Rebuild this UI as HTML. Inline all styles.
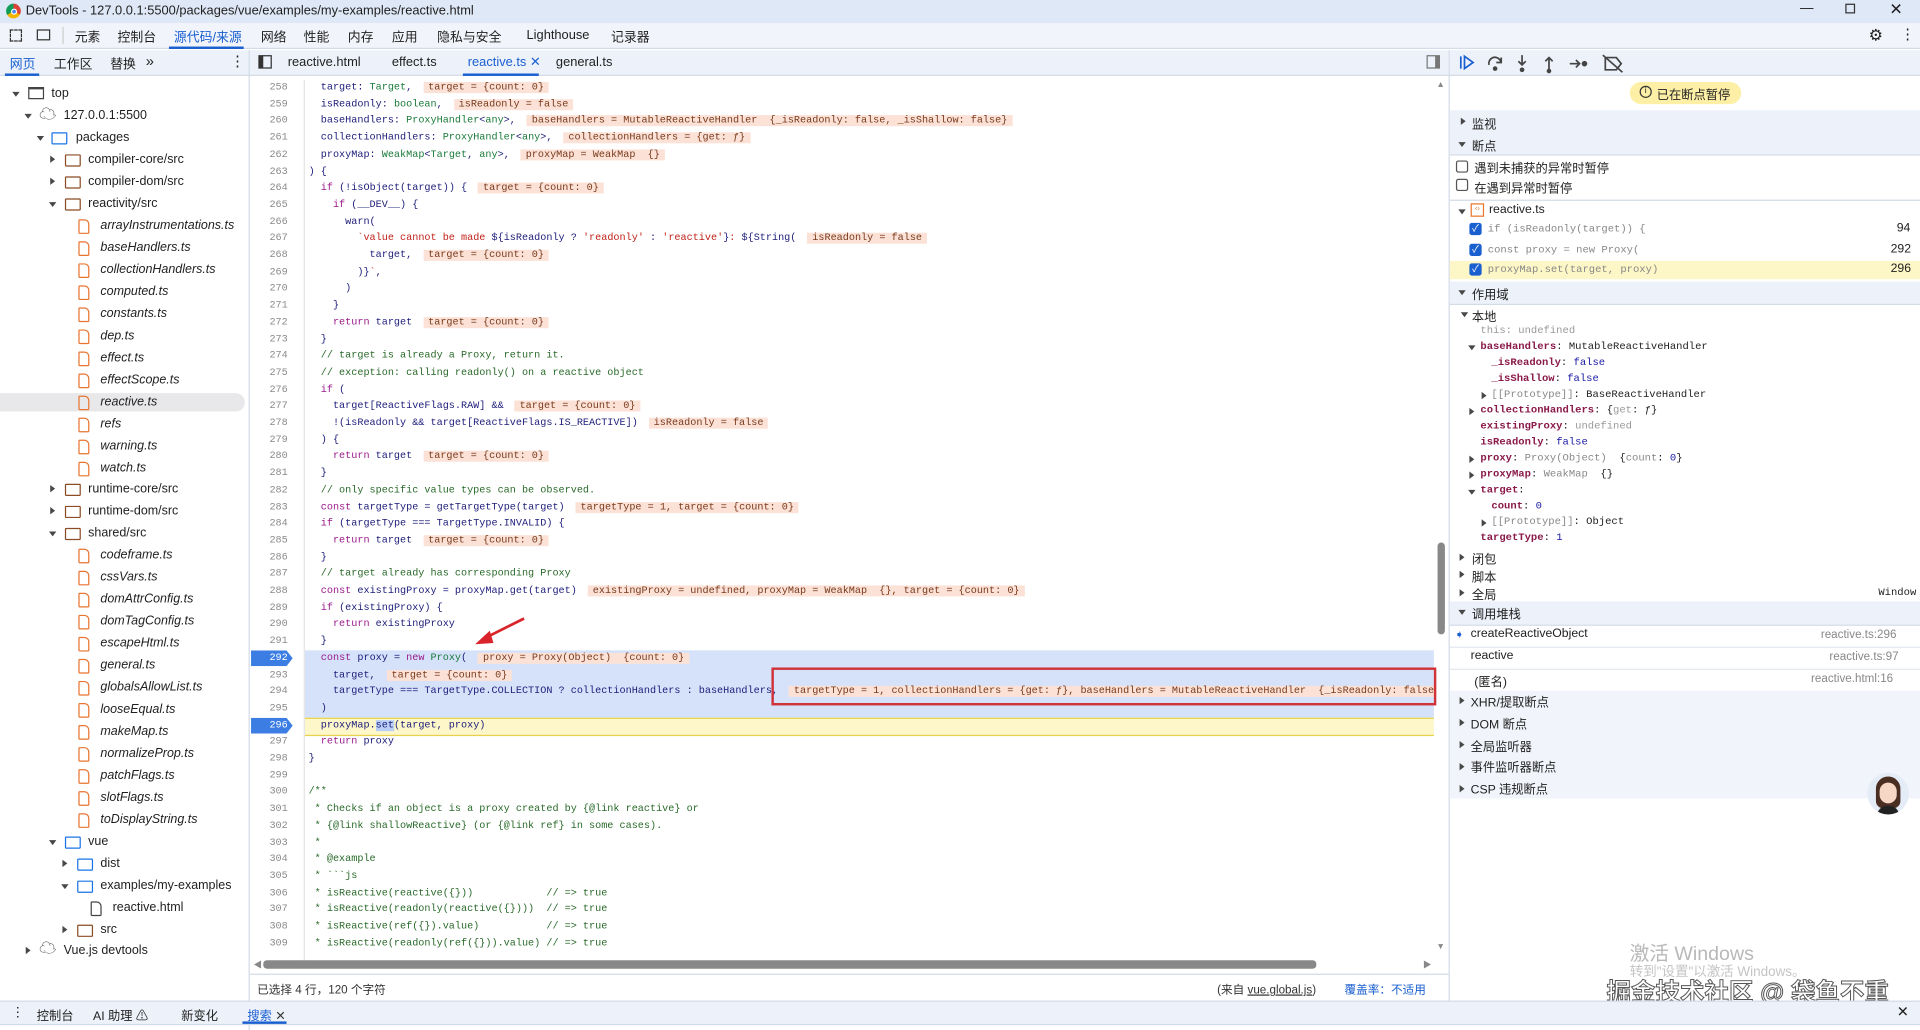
<!DOCTYPE html>
<html><head><meta charset="utf-8"><style>
*{margin:0;padding:0;box-sizing:border-box}
html,body{width:1920px;height:1030px;overflow:hidden;background:#fff}
#w{position:absolute;left:0;top:0;width:1568px;height:841px;transform:scale(1.22449,1.22473);transform-origin:0 0;font-family:"Liberation Sans","Noto Sans CJK SC",sans-serif;font-size:10.5px;color:#1f1f1f;background:#fff}
.a{position:absolute;white-space:pre}
.tr{position:absolute;white-space:pre;font-size:10.2px;line-height:14px}
.it{font-style:italic}
.arrd,.arrr{position:absolute;width:0;height:0}
.arrd{border-left:3.5px solid transparent;border-right:3.5px solid transparent;border-top:4.5px solid #474747}
.arrr{border-top:3.5px solid transparent;border-bottom:3.5px solid transparent;border-left:4.5px solid #474747}
.file{position:absolute;width:9px;height:12px;border:1.3px solid #e8742f;border-radius:1px 4px 1px 1px}
.fold{position:absolute;width:13px;height:10px;border:1.4px solid #8b4b24;border-radius:1px}
.fold.b{border-color:#1a73e8}
.code{position:absolute;left:0;font-family:"Liberation Mono","Noto Sans CJK SC",monospace;font-size:8.3px;line-height:13.7px;white-space:pre;height:13.7px;width:1172px}
.ln{position:absolute;left:205px;width:30px;text-align:right;color:#8a8a8a;font-size:8.3px}
.tx{position:absolute;left:252px;color:#1d1d7a}
.k{color:#9b1a8c}.g{color:#1a7a3a}.c{color:#2a6a2a}.s{color:#c0221a}
.bd{background:#fbe1d6;color:#7a3b1d;padding:0 4px;margin-left:4px}
.sc{position:absolute;font-family:"Liberation Mono","Noto Serif CJK SC",monospace;font-size:8.6px;white-space:pre;line-height:13px}
.nm{color:#8a1a4a;font-weight:bold}
.hdr{position:absolute;left:1184px;width:384px;height:18px;background:#edf1f9}
</style></head><body><div id="w">

<div class="a" style="left:0;top:0;width:1568px;height:19px;background:#dfe8f6"></div>
<div class="a" style="left:5px;top:3px;width:12px;height:12px;border-radius:50%;background:conic-gradient(#db4437 0 33%,#f4b400 0 66%,#0f9d58 0);"></div>
<div class="a" style="left:8.5px;top:6.5px;width:5px;height:5px;border-radius:50%;background:#4285f4;border:1px solid #fff"></div>
<div class="a" style="left:21px;top:3px;font-size:10.5px">DevTools - 127.0.0.1:5500/packages/vue/examples/my-examples/reactive.html</div>
<div class="a" style="left:1470px;top:1px;font-size:11px">—</div>
<div class="a" style="left:1507px;top:3px;width:8px;height:8px;border:1px solid #333"></div>
<div class="a" style="left:1543px;top:0px;font-size:13px">✕</div>

<div class="a" style="left:0;top:19px;width:1568px;height:21px;background:#f1f4fa;border-bottom:1px solid #d3dbe8"></div>
<div class="a" style="left:8px;top:24px;width:10px;height:10px;border:1px dashed #333"></div>
<div class="a" style="left:30px;top:24px;width:11px;height:9px;border:1.3px solid #333"></div>
<div class="a" style="left:51px;top:22px;width:1px;height:14px;background:#ccc"></div>
<div class="a" style="left:61px;top:23px">元素</div>
<div class="a" style="left:96px;top:23px">控制台</div>
<div class="a" style="left:142px;top:23px;color:#1a5fd0">源代码/来源</div>
<div class="a" style="left:138px;top:38px;width:61px;height:2px;background:#1a5fd0"></div>
<div class="a" style="left:213px;top:23px">网络</div>
<div class="a" style="left:248px;top:23px">性能</div>
<div class="a" style="left:284px;top:23px">内存</div>
<div class="a" style="left:320px;top:23px">应用</div>
<div class="a" style="left:357px;top:23px">隐私与安全</div>
<div class="a" style="left:430px;top:23px">Lighthouse</div>
<div class="a" style="left:499px;top:23px">记录器</div>
<div class="a" style="left:1526px;top:21px;font-size:13px">⚙</div>
<div class="a" style="left:1552px;top:21px;font-size:12px">⋮</div>

<div class="a" style="left:0;top:41px;width:1568px;height:21px;background:#edf2fa;border-bottom:1px solid #d3dbe8"></div>
<div class="a" style="left:8px;top:45px;color:#1a5fd0">网页</div>
<div class="a" style="left:4px;top:60px;width:28px;height:2px;background:#1a5fd0"></div>
<div class="a" style="left:44px;top:45px">工作区</div>
<div class="a" style="left:90px;top:45px">替换</div>
<div class="a" style="left:119px;top:43px;font-size:12px">»</div>
<div class="a" style="left:188px;top:43px;font-size:12px">⋮</div>
<div class="a" style="left:203px;top:41px;width:1px;height:800px;background:#d3dbe8"></div>
<div class="a" style="left:211px;top:45px;width:11px;height:11px;border:1.3px solid #333;border-left-width:4px"></div>
<div class="a" style="left:235px;top:45px">reactive.html</div>
<div class="a" style="left:320px;top:45px">effect.ts</div>
<div class="a" style="left:382px;top:45px;color:#1a5fd0">reactive.ts ✕</div>
<div class="a" style="left:378px;top:60px;width:62px;height:2px;background:#1a5fd0"></div>
<div class="a" style="left:454px;top:45px">general.ts</div>
<div class="a" style="left:1165px;top:45px;width:11px;height:11px;border:1.2px solid #777;border-right-width:4px"></div>
<div class="a" style="left:1183px;top:41px;width:1px;height:776px;background:#d3dbe8"></div>

<div class="a" style="left:0;top:321px;width:200px;height:15px;background:#e8e8ea;border-radius:0 8px 8px 0"></div>
<div class="arrd" style="left:10px;top:75px"></div><div class="a" style="left:23px;top:71px;width:13px;height:10px;border:1.4px solid #444;border-top-width:2.5px"></div><div class="tr" style="left:42px;top:70px">top</div>
<div class="arrd" style="left:20px;top:93px"></div><div class="tr" style="left:32px;top:86px;font-size:14px;color:#444">☁</div><div class="tr" style="left:52px;top:88px">127.0.0.1:5500</div>
<div class="arrd" style="left:30px;top:111px"></div><div class="fold b" style="left:42px;top:108px"></div><div class="tr" style="left:62px;top:106px">packages</div>
<div class="arrr" style="left:41px;top:127px"></div><div class="fold" style="left:53px;top:126px"></div><div class="tr" style="left:72px;top:124px">compiler-core/src</div>
<div class="arrr" style="left:41px;top:145px"></div><div class="fold" style="left:53px;top:144px"></div><div class="tr" style="left:72px;top:142px">compiler-dom/src</div>
<div class="arrd" style="left:40px;top:165px"></div><div class="fold" style="left:53px;top:162px"></div><div class="tr" style="left:72px;top:160px">reactivity/src</div>
<div class="file" style="left:64px;top:179px"></div><div class="tr it" style="left:82px;top:178px">arrayInstrumentations.ts</div>
<div class="file" style="left:64px;top:197px"></div><div class="tr it" style="left:82px;top:196px">baseHandlers.ts</div>
<div class="file" style="left:64px;top:215px"></div><div class="tr it" style="left:82px;top:214px">collectionHandlers.ts</div>
<div class="file" style="left:64px;top:233px"></div><div class="tr it" style="left:82px;top:232px">computed.ts</div>
<div class="file" style="left:64px;top:251px"></div><div class="tr it" style="left:82px;top:250px">constants.ts</div>
<div class="file" style="left:64px;top:269px"></div><div class="tr it" style="left:82px;top:268px">dep.ts</div>
<div class="file" style="left:64px;top:287px"></div><div class="tr it" style="left:82px;top:286px">effect.ts</div>
<div class="file" style="left:64px;top:305px"></div><div class="tr it" style="left:82px;top:304px">effectScope.ts</div>
<div class="file" style="left:64px;top:323px"></div><div class="tr it" style="left:82px;top:322px">reactive.ts</div>
<div class="file" style="left:64px;top:341px"></div><div class="tr it" style="left:82px;top:340px">refs</div>
<div class="file" style="left:64px;top:359px"></div><div class="tr it" style="left:82px;top:358px">warning.ts</div>
<div class="file" style="left:64px;top:377px"></div><div class="tr it" style="left:82px;top:376px">watch.ts</div>
<div class="arrr" style="left:41px;top:396px"></div><div class="fold" style="left:53px;top:395px"></div><div class="tr" style="left:72px;top:393px">runtime-core/src</div>
<div class="arrr" style="left:41px;top:414px"></div><div class="fold" style="left:53px;top:413px"></div><div class="tr" style="left:72px;top:411px">runtime-dom/src</div>
<div class="arrd" style="left:40px;top:434px"></div><div class="fold" style="left:53px;top:431px"></div><div class="tr" style="left:72px;top:429px">shared/src</div>
<div class="file" style="left:64px;top:448px"></div><div class="tr it" style="left:82px;top:447px">codeframe.ts</div>
<div class="file" style="left:64px;top:466px"></div><div class="tr it" style="left:82px;top:465px">cssVars.ts</div>
<div class="file" style="left:64px;top:484px"></div><div class="tr it" style="left:82px;top:483px">domAttrConfig.ts</div>
<div class="file" style="left:64px;top:502px"></div><div class="tr it" style="left:82px;top:501px">domTagConfig.ts</div>
<div class="file" style="left:64px;top:520px"></div><div class="tr it" style="left:82px;top:519px">escapeHtml.ts</div>
<div class="file" style="left:64px;top:538px"></div><div class="tr it" style="left:82px;top:537px">general.ts</div>
<div class="file" style="left:64px;top:556px"></div><div class="tr it" style="left:82px;top:555px">globalsAllowList.ts</div>
<div class="file" style="left:64px;top:574px"></div><div class="tr it" style="left:82px;top:573px">looseEqual.ts</div>
<div class="file" style="left:64px;top:592px"></div><div class="tr it" style="left:82px;top:591px">makeMap.ts</div>
<div class="file" style="left:64px;top:610px"></div><div class="tr it" style="left:82px;top:609px">normalizeProp.ts</div>
<div class="file" style="left:64px;top:628px"></div><div class="tr it" style="left:82px;top:627px">patchFlags.ts</div>
<div class="file" style="left:64px;top:646px"></div><div class="tr it" style="left:82px;top:645px">slotFlags.ts</div>
<div class="file" style="left:64px;top:664px"></div><div class="tr it" style="left:82px;top:663px">toDisplayString.ts</div>
<div class="arrd" style="left:40px;top:686px"></div><div class="fold b" style="left:53px;top:683px"></div><div class="tr" style="left:72px;top:681px">vue</div>
<div class="arrr" style="left:51px;top:702px"></div><div class="fold b" style="left:63px;top:701px"></div><div class="tr" style="left:82px;top:699px">dist</div>
<div class="arrd" style="left:50px;top:722px"></div><div class="fold b" style="left:63px;top:719px"></div><div class="tr" style="left:82px;top:717px">examples/my-examples</div>
<div class="file" style="left:74px;top:736px;border-color:#444"></div><div class="tr" style="left:92px;top:735px">reactive.html</div>
<div class="arrr" style="left:51px;top:756px"></div><div class="fold" style="left:63px;top:755px"></div><div class="tr" style="left:82px;top:753px">src</div>
<div class="arrr" style="left:21px;top:773px"></div><div class="tr" style="left:32px;top:767px;font-size:14px;color:#444">☁</div><div class="tr" style="left:52px;top:770px">Vue.js devtools</div>

<div class="a" style="left:249px;top:531px;width:922px;height:55px;background:#d5e2fa"></div>
<div class="a" style="left:249px;top:586px;width:922px;height:15px;background:#fdf7c9;border-top:1px solid #e6d24c;border-bottom:1px solid #e6d24c"></div>
<div class="a" style="left:205px;top:531px;width:34px;height:13px;background:#3b7de3;clip-path:polygon(0 0,85% 0,100% 50%,85% 100%,0 100%)"></div>
<div class="a" style="left:205px;top:586px;width:34px;height:13px;background:#3b7de3;clip-path:polygon(0 0,85% 0,100% 50%,85% 100%,0 100%)"></div>
<div class="a" style="left:248px;top:65px;width:1px;height:720px;background:#e4e4e4"></div>

<div style="position:absolute;left:0;top:65px;width:1172px;height:718px;overflow:hidden">
<div class="code" style="top:0"><span class="ln">258</span><span class="tx">  target: <span class="g">Target</span>, <span class="bd">target = {count: 0}</span></span></div>
<div class="code" style="top:13.7px"><span class="ln">259</span><span class="tx">  isReadonly: <span class="g">boolean</span>, <span class="bd">isReadonly = false</span></span></div>
<div class="code" style="top:27.4px"><span class="ln">260</span><span class="tx">  baseHandlers: <span class="g">ProxyHandler</span>&lt;<span class="g">any</span>&gt;, <span class="bd">baseHandlers = MutableReactiveHandler  {_isReadonly: false, _isShallow: false}</span></span></div>
<div class="code" style="top:41.1px"><span class="ln">261</span><span class="tx">  collectionHandlers: <span class="g">ProxyHandler</span>&lt;<span class="g">any</span>&gt;, <span class="bd">collectionHandlers = {get: ƒ}</span></span></div>
<div class="code" style="top:54.8px"><span class="ln">262</span><span class="tx">  proxyMap: <span class="g">WeakMap</span>&lt;<span class="g">Target</span>, <span class="g">any</span>&gt;, <span class="bd">proxyMap = WeakMap  {}</span></span></div>
<div class="code" style="top:68.5px"><span class="ln">263</span><span class="tx">) {</span></div>
<div class="code" style="top:82.2px"><span class="ln">264</span><span class="tx">  <span class="k">if</span> (!isObject(target)) { <span class="bd">target = {count: 0}</span></span></div>
<div class="code" style="top:95.9px"><span class="ln">265</span><span class="tx">    <span class="k">if</span> (__DEV__) {</span></div>
<div class="code" style="top:109.6px"><span class="ln">266</span><span class="tx">      warn(</span></div>
<div class="code" style="top:123.3px"><span class="ln">267</span><span class="tx">        <span class="s">&#96;value cannot be made </span>${isReadonly ? <span class="s">'readonly'</span> : <span class="s">'reactive'</span>}<span class="s">: </span>${String( <span class="bd">isReadonly = false</span></span></div>
<div class="code" style="top:137px"><span class="ln">268</span><span class="tx">          target, <span class="bd">target = {count: 0}</span></span></div>
<div class="code" style="top:150.7px"><span class="ln">269</span><span class="tx">        )}<span class="s">&#96;</span>,</span></div>
<div class="code" style="top:164.4px"><span class="ln">270</span><span class="tx">      )</span></div>
<div class="code" style="top:178.1px"><span class="ln">271</span><span class="tx">    }</span></div>
<div class="code" style="top:191.8px"><span class="ln">272</span><span class="tx">    <span class="k">return</span> target <span class="bd">target = {count: 0}</span></span></div>
<div class="code" style="top:205.5px"><span class="ln">273</span><span class="tx">  }</span></div>
<div class="code" style="top:219.2px"><span class="ln">274</span><span class="tx"><span class="c">  // target is already a Proxy, return it.</span></span></div>
<div class="code" style="top:232.9px"><span class="ln">275</span><span class="tx"><span class="c">  // exception: calling readonly() on a reactive object</span></span></div>
<div class="code" style="top:246.6px"><span class="ln">276</span><span class="tx">  <span class="k">if</span> (</span></div>
<div class="code" style="top:260.3px"><span class="ln">277</span><span class="tx">    target[ReactiveFlags.RAW] &amp;&amp; <span class="bd">target = {count: 0}</span></span></div>
<div class="code" style="top:274px"><span class="ln">278</span><span class="tx">    !(isReadonly &amp;&amp; target[ReactiveFlags.IS_REACTIVE]) <span class="bd">isReadonly = false</span></span></div>
<div class="code" style="top:287.7px"><span class="ln">279</span><span class="tx">  ) {</span></div>
<div class="code" style="top:301.4px"><span class="ln">280</span><span class="tx">    <span class="k">return</span> target <span class="bd">target = {count: 0}</span></span></div>
<div class="code" style="top:315.1px"><span class="ln">281</span><span class="tx">  }</span></div>
<div class="code" style="top:328.8px"><span class="ln">282</span><span class="tx"><span class="c">  // only specific value types can be observed.</span></span></div>
<div class="code" style="top:342.5px"><span class="ln">283</span><span class="tx">  <span class="k">const</span> targetType = getTargetType(target) <span class="bd">targetType = 1, target = {count: 0}</span></span></div>
<div class="code" style="top:356.2px"><span class="ln">284</span><span class="tx">  <span class="k">if</span> (targetType === TargetType.INVALID) {</span></div>
<div class="code" style="top:369.9px"><span class="ln">285</span><span class="tx">    <span class="k">return</span> target <span class="bd">target = {count: 0}</span></span></div>
<div class="code" style="top:383.6px"><span class="ln">286</span><span class="tx">  }</span></div>
<div class="code" style="top:397.3px"><span class="ln">287</span><span class="tx"><span class="c">  // target already has corresponding Proxy</span></span></div>
<div class="code" style="top:411px"><span class="ln">288</span><span class="tx">  <span class="k">const</span> existingProxy = proxyMap.get(target) <span class="bd">existingProxy = undefined, proxyMap = WeakMap  {}, target = {count: 0}</span></span></div>
<div class="code" style="top:424.7px"><span class="ln">289</span><span class="tx">  <span class="k">if</span> (existingProxy) {</span></div>
<div class="code" style="top:438.4px"><span class="ln">290</span><span class="tx">    <span class="k">return</span> existingProxy</span></div>
<div class="code" style="top:452.1px"><span class="ln">291</span><span class="tx">  }</span></div>
<div class="code" style="top:465.8px"><span class="ln" style="color:#fff">292</span><span class="tx">  <span class="k">const</span> proxy = <span class="k">new</span> <span class="g">Proxy</span>( <span class="bd">proxy = Proxy(Object)  {count: 0}</span></span></div>
<div class="code" style="top:479.5px"><span class="ln">293</span><span class="tx">    target, <span class="bd">target = {count: 0}</span></span></div>
<div class="code" style="top:493.2px"><span class="ln">294</span><span class="tx">    targetType === TargetType.COLLECTION ? collectionHandlers : baseHandlers, <span class="bd">targetType = 1, collectionHandlers = {get: ƒ}, baseHandlers = MutableReactiveHandler  {_isReadonly: false, _</span></span></div>
<div class="code" style="top:506.9px"><span class="ln">295</span><span class="tx">  )</span></div>
<div class="code" style="top:520.6px"><span class="ln" style="color:#fff">296</span><span class="tx">  proxyMap.<span style="background:#b9cff5">set</span>(target, proxy)</span></div>
<div class="code" style="top:534.3px"><span class="ln">297</span><span class="tx">  <span class="k">return</span> proxy</span></div>
<div class="code" style="top:548px"><span class="ln">298</span><span class="tx">}</span></div>
<div class="code" style="top:561.7px"><span class="ln">299</span><span class="tx"></span></div>
<div class="code" style="top:575.4px"><span class="ln">300</span><span class="tx"><span class="c">/**</span></span></div>
<div class="code" style="top:589.1px"><span class="ln">301</span><span class="tx"><span class="c"> * Checks if an object is a proxy created by {@link reactive} or</span></span></div>
<div class="code" style="top:602.8px"><span class="ln">302</span><span class="tx"><span class="c"> * {@link shallowReactive} (or {@link ref} in some cases).</span></span></div>
<div class="code" style="top:616.5px"><span class="ln">303</span><span class="tx"><span class="c"> *</span></span></div>
<div class="code" style="top:630.2px"><span class="ln">304</span><span class="tx"><span class="c"> * @example</span></span></div>
<div class="code" style="top:643.9px"><span class="ln">305</span><span class="tx"><span class="c"> * &#96;&#96;&#96;js</span></span></div>
<div class="code" style="top:657.6px"><span class="ln">306</span><span class="tx"><span class="c"> * isReactive(reactive({}))            // =&gt; true</span></span></div>
<div class="code" style="top:671.3px"><span class="ln">307</span><span class="tx"><span class="c"> * isReactive(readonly(reactive({})))  // =&gt; true</span></span></div>
<div class="code" style="top:685px"><span class="ln">308</span><span class="tx"><span class="c"> * isReactive(ref({}).value)           // =&gt; true</span></span></div>
<div class="code" style="top:698.7px"><span class="ln">309</span><span class="tx"><span class="c"> * isReactive(readonly(ref({})).value) // =&gt; true</span></span></div>
</div>

<div class="a" style="left:630px;top:545px;width:543px;height:31px;border:2px solid #d0343b"></div>
<svg class="a" style="left:380px;top:498px" width="60" height="34"><line x1="48" y1="7" x2="14" y2="24" stroke="#d9242b" stroke-width="2.2"/><polygon points="8,28 20,17 23,27" fill="#d9242b"/></svg>

<div class="a" style="left:1173px;top:66px;font-size:7px;color:#888">▲</div>
<div class="a" style="left:1174px;top:443px;width:6px;height:75px;background:#888;border-radius:3px"></div>
<div class="a" style="left:1173px;top:770px;font-size:7px;color:#888">▼</div>
<div class="a" style="left:207px;top:783px;font-size:7px;color:#888">◀</div>
<div class="a" style="left:215px;top:784px;width:860px;height:7px;background:#888;border-radius:3px"></div>
<div class="a" style="left:1162px;top:783px;font-size:7px;color:#888">▶</div>

<div class="a" style="left:204px;top:795px;width:979px;height:1px;background:#d3dbe8"></div>
<div class="a" style="left:210px;top:800px;font-size:9.5px;color:#333">已选择 4 行，120 个字符</div>
<div class="a" style="left:994px;top:800px;font-size:9.5px;color:#333">(来自 <u>vue.global.js</u>)</div>
<div class="a" style="left:1098px;top:800px;font-size:9.5px;color:#1a5fd0">覆盖率：不适用</div>

<div class="a" style="left:1184px;top:41px;width:384px;height:21px;background:#edf2fa;border-bottom:1px solid #d3dbe8"></div>
<svg class="a" style="left:1190px;top:43px" width="140" height="17" fill="none" stroke="#1a5fd0" stroke-width="1.4">
<path d="M3 3v10M6 3l7 5-7 5z"/>
<g stroke="#444"><path d="M26 10a5 5 0 0 1 9-4l1 2M36 4v4h-4"/><circle cx="31" cy="13" r="1.2" fill="#444"/>
<path d="M53 2v8M50 7l3 3 3-3"/><circle cx="53" cy="14" r="1.2" fill="#444"/>
<path d="M75 14V5M72 7l3-3 3 3"/><circle cx="75" cy="15" r="1.2" fill="#444"/>
<path d="M92 9h8M97 6l3 3-3 3"/><circle cx="104" cy="9" r="1.6" fill="#444"/>
<path d="M121 4h9l4 5-4 5h-9zM119 2l16 14"/></g></svg>
<div class="a" style="left:1331px;top:67px;width:91px;height:18px;background:#fdf0a6;border-radius:9px"></div>
<div class="a" style="left:1339px;top:70px;width:10px;height:10px;border:1.2px solid #333;border-radius:50%;font-size:7px;line-height:8px;text-align:center">i</div>
<div class="a" style="left:1353px;top:69px;font-size:10px">已在断点暂停</div>

<div class="hdr" style="top:90px;height:36px"></div>
<div class="arrr" style="left:1193px;top:96px"></div><div class="a" style="left:1202px;top:93px;font-size:10px">监视</div>
<div class="arrd" style="left:1191px;top:116px"></div><div class="a" style="left:1202px;top:111px;font-size:10px">断点</div>
<div class="a" style="left:1184px;top:126px;width:384px;height:1px;background:#d3dbe8"></div>
<div class="a" style="left:1189px;top:131px;width:10px;height:10px;border:1px solid #555;border-radius:2px"></div><div class="a" style="left:1204px;top:129px;font-size:10px">遇到未捕获的异常时暂停</div>
<div class="a" style="left:1189px;top:146px;width:10px;height:10px;border:1px solid #555;border-radius:2px"></div><div class="a" style="left:1204px;top:145px;font-size:10px">在遇到异常时暂停</div>
<div class="a" style="left:1184px;top:163px;width:384px;height:1px;background:#d3dbe8"></div>
<div class="arrd" style="left:1191px;top:171px"></div><div class="a" style="left:1201px;top:166px;width:11px;height:11px;border:1px solid #e8742f;font-size:6px;color:#e8742f;text-align:center;line-height:9px">‹›</div><div class="a" style="left:1216px;top:166px;font-size:10px">reactive.ts</div>
<div class="a" style="left:1184px;top:213px;width:384px;height:15px;background:#fdf6c6"></div>
<div class="a" style="left:1200px;top:182px;width:10px;height:10px;background:#1a5fd0;border-radius:2px;color:#fff;font-size:8px;line-height:10px;text-align:center">✓</div><div class="sc" style="left:1215px;top:181px;color:#888">if (isReadonly(target)) {</div><div class="a" style="left:1549px;top:181px;font-size:10px">94</div>
<div class="a" style="left:1200px;top:199px;width:10px;height:10px;background:#1a5fd0;border-radius:2px;color:#fff;font-size:8px;line-height:10px;text-align:center">✓</div><div class="sc" style="left:1215px;top:198px;color:#888">const proxy = new Proxy(</div><div class="a" style="left:1544px;top:198px;font-size:10px">292</div>
<div class="a" style="left:1200px;top:215px;width:10px;height:10px;background:#1a5fd0;border-radius:2px;color:#fff;font-size:8px;line-height:10px;text-align:center">✓</div><div class="sc" style="left:1215px;top:214px;color:#888">proxyMap.set(target, proxy)</div><div class="a" style="left:1544px;top:214px;font-size:10px">296</div>

<div class="hdr" style="top:230px"></div>
<div class="a" style="left:1184px;top:248px;width:384px;height:1px;background:#d3dbe8"></div>
<div class="arrd" style="left:1191px;top:237px"></div><div class="a" style="left:1202px;top:232px;font-size:10px">作用域</div>
<div class="arrd" style="left:1193px;top:255px"></div><div class="a" style="left:1202px;top:250px;font-size:10px">本地</div>
<div class="sc" style="left:1209px;top:264px;color:#999">this: undefined</div>
<div class="arrd" style="left:1199px;top:282px"></div><div class="sc" style="left:1209px;top:277px"><span class="nm">baseHandlers</span>: MutableReactiveHandler</div>
<div class="sc" style="left:1218px;top:290px"><span class="nm">_isReadonly</span>: <span style="color:#1a1aa6">false</span></div>
<div class="sc" style="left:1218px;top:303px"><span class="nm">_isShallow</span>: <span style="color:#1a1aa6">false</span></div>
<div class="arrr" style="left:1210px;top:320px"></div><div class="sc" style="left:1218px;top:316px"><span style="color:#888">[[Prototype]]</span>: BaseReactiveHandler</div>
<div class="arrr" style="left:1200px;top:333px"></div><div class="sc" style="left:1209px;top:329px"><span class="nm">collectionHandlers</span>: {<span style="color:#999">get</span>: ƒ}</div>
<div class="sc" style="left:1209px;top:342px"><span class="nm">existingProxy</span>: <span style="color:#999">undefined</span></div>
<div class="sc" style="left:1209px;top:355px"><span class="nm">isReadonly</span>: <span style="color:#1a1aa6">false</span></div>
<div class="arrr" style="left:1200px;top:372px"></div><div class="sc" style="left:1209px;top:368px"><span class="nm">proxy</span>: <span style="color:#888">Proxy(Object)</span>  {<span style="color:#888">count</span>: <span style="color:#1a1aa6">0</span>}</div>
<div class="arrr" style="left:1200px;top:385px"></div><div class="sc" style="left:1209px;top:381px"><span class="nm">proxyMap</span>: <span style="color:#888">WeakMap</span>  {}</div>
<div class="arrd" style="left:1199px;top:400px"></div><div class="sc" style="left:1209px;top:394px"><span class="nm">target</span>:</div>
<div class="sc" style="left:1218px;top:407px"><span class="nm">count</span>: <span style="color:#1a1aa6">0</span></div>
<div class="arrr" style="left:1210px;top:424px"></div><div class="sc" style="left:1218px;top:420px"><span style="color:#888">[[Prototype]]</span>: Object</div>
<div class="sc" style="left:1209px;top:433px"><span class="nm">targetType</span>: <span style="color:#1a1aa6">1</span></div>
<div class="arrr" style="left:1192px;top:452px"></div><div class="a" style="left:1202px;top:448px;font-size:10px">闭包</div>
<div class="arrr" style="left:1192px;top:466px"></div><div class="a" style="left:1202px;top:463px;font-size:10px">脚本</div>
<div class="arrr" style="left:1192px;top:481px"></div><div class="a" style="left:1202px;top:477px;font-size:10px">全局</div><div class="sc" style="left:1534px;top:478px">Window</div>

<div class="hdr" style="top:491px;height:19px"></div>
<div class="arrd" style="left:1191px;top:498px"></div><div class="a" style="left:1202px;top:493px;font-size:10px">调用堆栈</div>
<div class="a" style="left:1184px;top:510px;width:384px;height:1px;background:#d3dbe8"></div>
<div class="a" style="left:1188px;top:513px;color:#1a5fd0;font-size:9px">➧</div><div class="a" style="left:1201px;top:512px;font-size:10px">createReactiveObject</div><div class="a" style="left:1487px;top:513px;font-size:9.5px;color:#888">reactive.ts:296</div>
<div class="a" style="left:1184px;top:528px;width:384px;height:1px;background:#e3e8f0"></div>
<div class="a" style="left:1201px;top:530px;font-size:10px">reactive</div><div class="a" style="left:1494px;top:531px;font-size:9.5px;color:#888">reactive.ts:97</div>
<div class="a" style="left:1184px;top:546px;width:384px;height:1px;background:#e3e8f0"></div>
<div class="a" style="left:1204px;top:548px;font-size:10px">(匿名)</div><div class="a" style="left:1479px;top:549px;font-size:9.5px;color:#888">reactive.html:16</div>
<div class="a" style="left:1184px;top:564px;width:384px;height:88px;background:#f1f4fa"></div>
<div class="arrr" style="left:1192px;top:569px"></div><div class="a" style="left:1201px;top:565px;font-size:10px">XHR/提取断点</div>
<div class="arrr" style="left:1192px;top:587px"></div><div class="a" style="left:1201px;top:583px;font-size:10px">DOM 断点</div>
<div class="arrr" style="left:1192px;top:605px"></div><div class="a" style="left:1201px;top:601px;font-size:10px">全局监听器</div>
<div class="arrr" style="left:1192px;top:623px"></div><div class="a" style="left:1201px;top:618px;font-size:10px">事件监听器断点</div>
<div class="arrr" style="left:1192px;top:641px"></div><div class="a" style="left:1201px;top:636px;font-size:10px">CSP 违规断点</div>
<div class="a" style="left:1525px;top:631px;width:34px;height:34px;border-radius:50%;background:#e4ecf8;overflow:hidden">
<div class="a" style="left:7px;top:3px;width:20px;height:26px;border-radius:10px 10px 6px 6px;background:#4a2e22"></div>
<div class="a" style="left:10px;top:8px;width:14px;height:17px;border-radius:7px;background:#f6d7c6"></div>
<div class="a" style="left:8px;top:27px;width:18px;height:10px;border-radius:8px 8px 0 0;background:#222"></div></div>

<div class="a" style="left:1331px;top:765px;font-size:16px;color:#b8b8b8">激活 Windows</div>
<div class="a" style="left:1331px;top:785px;font-size:11px;color:#c4c4c4">转到"设置"以激活 Windows。</div>
<div class="a" style="left:1312px;top:794px;font-size:20px;font-weight:bold;color:#fff;-webkit-text-stroke:0.8px #555">掘金技术社区 @ 袋鱼不重</div>

<div class="a" style="left:0;top:817px;width:1568px;height:20px;background:#edf2fa;border-top:1px solid #d3dbe8;border-bottom:1px solid #d3dbe8"></div>
<div class="a" style="left:9px;top:820px;font-size:11px">⋮</div>
<div class="a" style="left:30px;top:821px;font-size:10px">控制台</div>
<div class="a" style="left:76px;top:821px;font-size:10px">AI 助理 ⚠</div>
<div class="a" style="left:148px;top:821px;font-size:10px">新变化</div>
<div class="a" style="left:202px;top:821px;font-size:10px;color:#1a5fd0">搜索 <span style="color:#333">✕</span></div>
<div class="a" style="left:198px;top:834px;width:36px;height:2px;background:#1a5fd0"></div>
<div class="a" style="left:1549px;top:819px;font-size:12px">✕</div>
</div></body></html>
